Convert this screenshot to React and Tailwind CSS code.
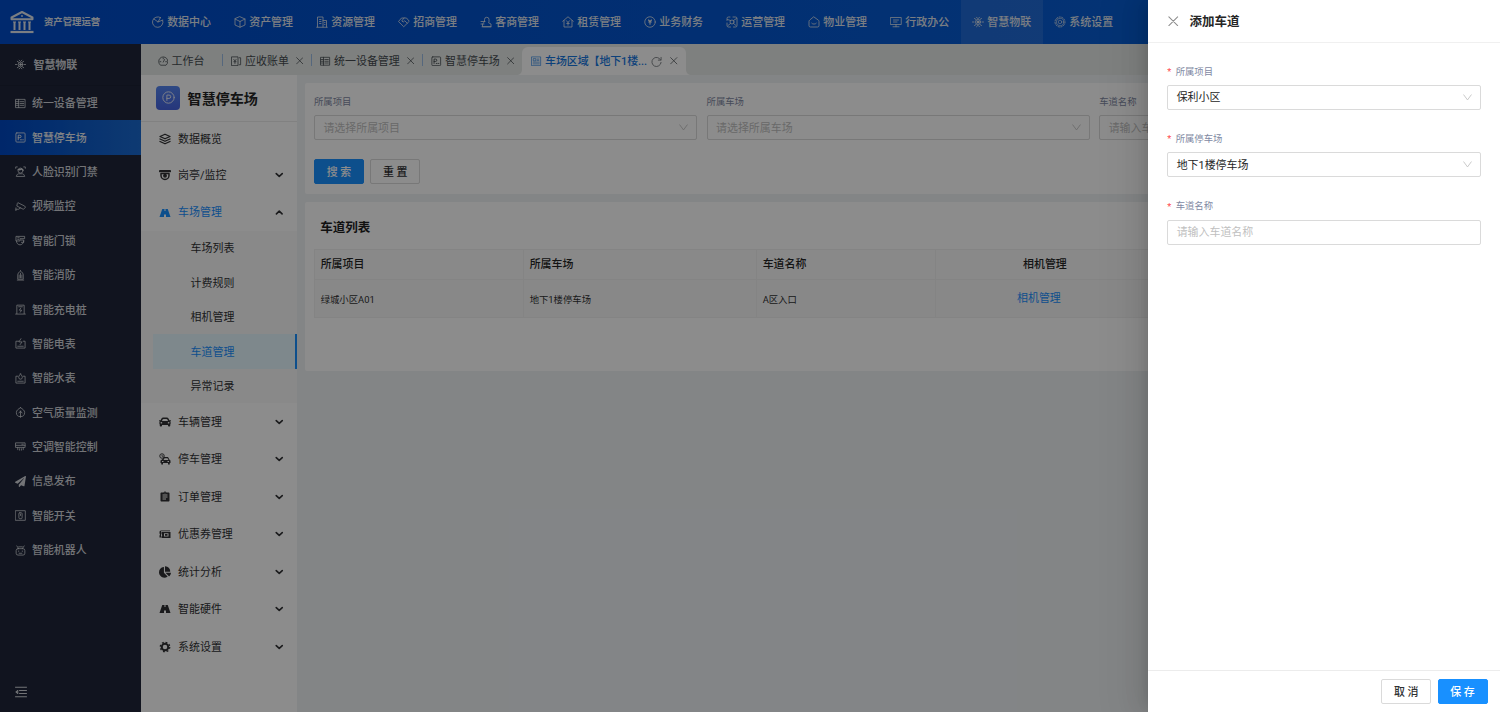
import React from 'react';
import { FaCar, FaChartPie, FaPaperPlane } from 'react-icons/fa';
import { MdAssignment } from 'react-icons/md';

function Icon({ children, className = 'size-[11px]', w = 1.7 }) {
  return (
    <svg
      viewBox="0 0 24 24"
      fill="none"
      stroke="currentColor"
      strokeWidth={w}
      strokeLinecap="round"
      strokeLinejoin="round"
      className={`shrink-0 ${className}`}
    >
      {children}
    </svg>
  );
}

const art = {
  data: (
    <>
      <path d="M21.5 9A10.5 10.5 0 1 1 17 3.2" />
      <path d="M4 6l8 6 9.5-4M12 12l5-9" />
    </>
  ),
  cube: (
    <>
      <path d="M12 1.5l10 4.5v12l-10 4.5L2 18V6z" />
      <path d="M2 6l10 5 10-5M12 11v11.5" />
    </>
  ),
  building: (
    <>
      <path d="M1.500 22.500h21M3 22V2h11v20M14 9h7v13" />
      <path d="M7 7h3M7 11h3M7 15h3M17 13h1M17 17h1" />
    </>
  ),
  deal: (
    <>
      <path d="M1.500 10.500L7 4h10l5.500 6.500L12 21z" />
      <path d="M12 4L7.500 10l3 2 3-2.500 5 5" />
    </>
  ),
  client: (
    <>
      <path d="M9 11V7a4.500 4.500 0 0 1 9 0v4a4 4 0 0 1-1 2.500l5 2.500v5.500H5v-5z" />
      <path d="M2 11h8M2 16h6M4 21.500h18" />
    </>
  ),
  rent: (
    <>
      <path d="M1.500 10.500L12 1.500l10.500 9M4 9v13h16V9" />
      <path d="M9 9.500l3 3.500 3-3.500M12 13v5.500M9.500 15h5" />
    </>
  ),
  finance: (
    <>
      <circle cx="12" cy="12" r="10.500" />
      <path d="M9 8l3 3 3-3M9.500 12h5M12 11v5.500" strokeWidth="2.200" />
    </>
  ),
  ops: (
    <>
      <path d="M2 9V5a3 3 0 0 1 3-3h3M14 2h5a3 3 0 0 1 3 3v14a3 3 0 0 1-3 3h-4M9 22H5a3 3 0 0 1-3-3v-5" />
      <circle cx="12" cy="12" r="4" />
      <path d="M3 7l6 2M15 9l6-4M4 19l5-4M15 15l5 4" />
    </>
  ),
  property: (
    <>
      <path d="M12 2l9 6.500a3 3 0 0 1 1 2.500v8a3 3 0 0 1-3 3H5a3 3 0 0 1-3-3v-8a3 3 0 0 1 1-2.500z" />
      <path d="M7.500 14.500a6 6 0 0 0 9 0" />
    </>
  ),
  office: (
    <>
      <path d="M1.500 3h21v14h-21zM12 17v4.500M6 21.500h12" />
      <path d="M7 8h10M7 12h7" />
    </>
  ),
  iot: (
    <>
      <circle cx="12" cy="12" r="5" />
      <circle cx="12" cy="12" r="2" fill="currentColor" />
      <path d="M1 12h3M20 12h3M5 5l3 2M16 7l3-2M5 19l3-2M16 17l3 2M9 2.500l3 3 3-3M9 21.500l3-3 3 3" />
    </>
  ),
  gearDash: (
    <>
      <circle cx="12" cy="12" r="10" strokeDasharray="2.500 3" />
      <circle cx="12" cy="12" r="7.500" strokeWidth="1.200" />
      <circle cx="12" cy="12" r="3.500" strokeWidth="1.200" />
    </>
  ),
  device: (
    <>
      <path d="M2 3h20v18H2zM8 3v18" />
      <path d="M11 8h8M11 12h8M11 16h8M2 8h6M2 12h6M2 16h6" />
    </>
  ),
  parking: (
    <>
      <rect x="2" y="2" width="20" height="20" rx="2" />
      <path d="M7 17V7h3.500a2.700 2.700 0 0 1 0 5.500H7M12 17h2M17 17h1" strokeWidth="2" />
    </>
  ),
  face: (
    <>
      <path d="M1.500 5V2H5M19 2h3.500v3M3 22c1-5 5-5 5-5h8s4 0 5 5z" />
      <circle cx="12" cy="10" r="5.500" />
      <path d="M7 8c4 1 7-2 7-2s1 2 3 2" strokeWidth="3" />
    </>
  ),
  camera: (
    <>
      <path d="M7 4L21 11a3 3 0 0 1 0 5l-3 2L4 11l1-5z" />
      <path d="M2 21v-6M2 18h6l4-3" />
    </>
  ),
  lock: (
    <>
      <path d="M3 3h18v5H11v5H3zM3 13c0 5 4 8.500 8 8.500s8-3.500 8-8.500" />
      <path d="M6 6h3M6 9.500h2M13 11h6v5h-5" />
    </>
  ),
  fire: (
    <>
      <path d="M12 2c4 3 6 6 6 9v9H6v-9c0-3 2-6 6-9zM5 22h14" />
      <path d="M12 7v10M9 11v6M15 11v6" />
    </>
  ),
  charger: (
    <>
      <path d="M4 21V2.500h16V21M1.500 22h21M8 6h8" />
      <path d="M12.500 9L9.500 13.500h5L11.500 18" />
    </>
  ),
  electric: (
    <>
      <path d="M8 7H2v15h20V7h-4M6 18h12" />
      <path d="M13 1.500L8.500 8.500h7L11 14.500" />
    </>
  ),
  water: (
    <>
      <path d="M6 7H2v15h20V7h-4M6 18h12" />
      <path d="M12 2c3 4 4 5.500 4 7.500a4 4 0 0 1-8 0C8 7.500 9 6 12 2z" />
    </>
  ),
  air: (
    <>
      <path d="M12 1.500c5 3 9 6 9 10.500a9 9 0 0 1-18 0C3 7.500 7 4.500 12 1.500zM12 9v13.500" />
      <path d="M12 9l-3.500 4M12 9l3.500 4" />
    </>
  ),
  ac: (
    <>
      <path d="M2 4h20v10H2zM2 9.500h20M15 7h3" />
      <path d="M6 14v5M10 17v3M14 17v3M18 14v5" />
    </>
  ),
  toggle: (
    <>
      <path d="M1.500 1.500h21v21h-21z" />
      <rect x="8.500" y="6" width="7" height="13" rx="2" />
      <path d="M12 9v3" />
    </>
  ),
  robot: (
    <>
      <rect x="2.500" y="8" width="19" height="14" rx="4" />
      <path d="M8 8L4 2M16 8l4-6M8 4h8M8 13v1M16 13v1M9 18h6" />
    </>
  ),
  gauge: (
    <>
      <path d="M5 20.500a10.500 10.500 0 1 1 14 0zM12 14l3-6" />
      <path d="M12 4.500v2M4.500 13h2M17.500 13h2" />
    </>
  ),
  bill: (
    <>
      <path d="M2 2h14v20H2zM19 4h3v16h-3" />
      <path d="M6.500 8L9 11l2.500-3M9 11v6M6.500 13h5" />
    </>
  ),
  area: (
    <>
      <path d="M2 2h20v20H2z" />
      <path d="M5 18h14M5 14h14M6 6h5v5H6zM14 7h4M14 10h4" />
    </>
  ),
  menuLayers: (
    <>
      <path d="M12 2.500l10 4.500-10 4.500L2 7z" />
      <path d="M2 12l10 4.500L22 12M2 17l10 4.500L22 17" />
    </>
  ),
  dome: (
    <>
      <path d="M2 4h20" strokeWidth="4.500" />
      <path d="M4 9v4a8 8 0 0 0 16 0V9z" strokeWidth="3" />
      <circle cx="12" cy="13.500" r="2.500" fill="currentColor" />
    </>
  ),
};

const topNav = [
  ['数据中心', 'data'],
  ['资产管理', 'cube'],
  ['资源管理', 'building'],
  ['招商管理', 'deal'],
  ['客商管理', 'client'],
  ['租赁管理', 'rent'],
  ['业务财务', 'finance'],
  ['运营管理', 'ops'],
  ['物业管理', 'property'],
  ['行政办公', 'office'],
  ['智慧物联', 'iot'],
  ['系统设置', 'gearDash'],
];

const sideNav = [
  ['统一设备管理', 'device'],
  ['智慧停车场', 'parking'],
  ['人脸识别门禁', 'face'],
  ['视频监控', 'camera'],
  ['智能门锁', 'lock'],
  ['智能消防', 'fire'],
  ['智能充电桩', 'charger'],
  ['智能电表', 'electric'],
  ['智能水表', 'water'],
  ['空气质量监测', 'air'],
  ['空调智能控制', 'ac'],
  ['信息发布', 'plane'],
  ['智能开关', 'toggle'],
  ['智能机器人', 'robot'],
];

function Close({ className = 'size-[8px]', w = 2.4 }) {
  return (
    <Icon className={className} w={w}>
      <path d="M2 2l20 20M22 2L2 22" />
    </Icon>
  );
}

function Header() {
  return (
    <header className="flex h-[43.750px] shrink-0 items-center bg-linear-to-r from-[#004bc8] to-[#0d63d8] text-[#e0e6ee]">
      <div className="flex w-[140.700px] shrink-0 items-center pl-[9.500px]">
        <svg viewBox="0 0 24 24" className="size-[24px] fill-none stroke-current" strokeWidth="2">
          <path d="M1.500 7.500L12 2l10.500 5.500v1.700h-21z" strokeLinejoin="round" />
          <path d="M4.500 12v8M9.500 12v8M14.500 12v8M19.500 12v8" />
          <path d="M3 12h3M8 12h3M13 12h3M18 12h3" strokeWidth="1.200" />
          <path d="M.5 22h23" strokeWidth="2.200" />
          <circle cx="12" cy="6" r=".9" fill="currentColor" stroke="none" />
        </svg>
        <span className="ml-[10.500px] text-[9.375px] font-bold">资产管理运营</span>
      </div>
      <nav className="flex h-full">
        {topNav.map(([label, icon]) => (
          <div
            key={label}
            className={`flex h-full w-[82.030px] items-center pl-[11.500px] ${label === '智慧物联' ? 'bg-white/10' : ''}`}
          >
            <Icon className="size-[12px]" w={1.6}>{art[icon]}</Icon>
            <span className="ml-[3px] pt-[2px] text-[10.940px] font-medium whitespace-nowrap">{label}</span>
          </div>
        ))}
      </nav>
    </header>
  );
}

function SideBar() {
  return (
    <aside className="flex w-[140.600px] shrink-0 flex-col bg-[#1f263a] text-[#d2d4d9]">
      <div className="flex h-[42.300px] items-center border-b border-[#1c2233] pl-[15px]">
        <Icon>{art.iot}</Icon>
        <span className="ml-[7.500px] pt-[3px] text-[10.940px] font-bold">智慧物联</span>
      </div>
      {sideNav.map(([label, icon]) => (
        <div
          key={label}
          className={`flex h-[34.375px] items-center pl-[14.500px] ${
            label === '智慧停车场' ? 'bg-linear-to-r from-[#0047c2] to-[#1a6ad0] text-[#eceef2]' : ''
          }`}
        >
          {icon === 'plane' ? <FaPaperPlane className="size-[11px]" /> : <Icon>{art[icon]}</Icon>}
          <span className="ml-[6.500px] pt-[2.500px] text-[10.940px] font-medium">{label}</span>
        </div>
      ))}
      <div className="mt-auto pb-[14px] pl-[15px]">
        <Icon className="size-[12px]" w={2}>
          <path d="M1 2.500h22M9 9h14M9 15h14M1 21.500h22" />
          <path d="M5 9l-3.500 3L5 15z" fill="currentColor" />
        </Icon>
      </div>
    </aside>
  );
}

function Tab({ icon, label, close = true, className = '' }) {
  return (
    <div className={`flex items-center pt-[3px] text-[#454b50] ${className}`}>
      <Icon className="size-[10.500px]" w={1.800}>{art[icon]}</Icon>
      <span className="ml-[3.500px] pt-[2px] text-[10.940px] whitespace-nowrap">{label}</span>
      {close && <Close className="ml-[7px] size-[7.500px]" w={2.400} />}
    </div>
  );
}

function Divider() {
  return <span className="mt-[1px] h-[12px] w-px shrink-0 bg-[#9cbce4]" />;
}

function TabBar() {
  return (
    <div className="flex h-[31.250px] shrink-0 items-center bg-[#e6eae8] pl-[17px]">
      <Tab icon="gauge" label="工作台" close={false} className="w-[64px]" />
      <Divider />
      <Tab icon="bill" label="应收账单" className="w-[88.500px] pl-[8.500px]" />
      <Divider />
      <Tab icon="device" label="统一设备管理" className="w-[110px] pl-[8px]" />
      <Divider />
      <Tab icon="parking" label="智慧停车场" className="w-[98.500px] pl-[8px]" />
      <div className="relative flex h-[28px] w-[164px] shrink-0 items-center self-end rounded-t-[6px] bg-white pl-[9.500px] text-[#1677e0]">
        <svg viewBox="0 0 6 6" className="absolute bottom-0 -left-[6px] size-[6px] fill-white">
          <path d="M6 0v6H0c4 0 6-2 6-6z" />
        </svg>
        <svg viewBox="0 0 6 6" className="absolute -right-[6px] bottom-0 size-[6px] fill-white">
          <path d="M0 0v6h6C2 6 0 4 0 0z" />
        </svg>
        <Icon className="size-[10.500px]" w={1.400}>{art.area}</Icon>
        <span className="ml-[3.500px] w-[101.500px] pt-[2px] text-[10.940px] font-medium tracking-[-0.08px] whitespace-nowrap">
          车场区域【地下1楼...
        </span>
        <Icon className="ml-[4.500px] size-[11px] text-[#7c8084]" w={2}>
          <path d="M21 8.500A10 10 0 1 0 22 14M22 3v6h-6" />
        </Icon>
        <Close className="ml-[8px] size-[7.500px] text-[#5c6064]" w={2.600} />
      </div>
    </div>
  );
}

function Road() {
  return (
    <svg viewBox="0 0 24 24" className="size-[12px] fill-current">
      <path d="M6.500 4H11v4h2V4h4.500L23 20h-9v-5h-4v5H1z" />
      <path d="M11 10h2v3h-2z" />
    </svg>
  );
}

function ParkedCar() {
  return (
    <svg viewBox="0 0 24 24" className="size-[12px] fill-current">
      <path d="M10 8h8l3 5.500 2 1.500v5h-1.500v3H18v-3H8v3H4.500v-3H3v-5l3-2zM11 10.500L9 14h10l-2-3.500zM6 16v2h3v-2zM17 16v2h3v-2z" fillRule="evenodd" />
      <circle cx="6" cy="6" r="4.500" fill="none" stroke="currentColor" strokeWidth="1.800" />
      <path d="M6 3.500V6.500h3" fill="none" stroke="currentColor" strokeWidth="1.500" />
    </svg>
  );
}

function Coupon() {
  return (
    <svg viewBox="0 0 24 24" className="size-[12px] fill-current">
      <path d="M5 8h18v12H5v-3l1.500-2.500L5 11.500zM10 10.500v6.500h9v-6.500zM12 12h5v3.500h-5z" fillRule="evenodd" />
      <path d="M1 7l2.500-2H22v1.500H4V19H1v-3.500L2 13l-1-2.500z" />
    </svg>
  );
}

function Gear() {
  return (
    <svg viewBox="0 0 24 24" className="size-[12px]" fill="none" stroke="currentColor">
      <circle cx="12" cy="12" r="6.500" strokeWidth="4" />
      <circle cx="12" cy="12" r="9.500" strokeWidth="2.500" strokeDasharray="3.730" />
    </svg>
  );
}

const lineIcon = (name) => <Icon className="size-[12px]" w={2.700}>{art[name]}</Icon>;

function MenuRow({ icon, label, open, active, arrow = true, className = 'h-[37.500px]' }) {
  return (
    <div className={`flex items-center pr-[13px] pl-[18px] ${active ? 'text-[#1890ff]' : 'text-[#303133]'} ${className}`}>
      <span className="flex w-[12px] shrink-0">{icon}</span>
      <span className="ml-[7.500px] pt-[2px] text-[10.940px]">{label}</span>
      {arrow && (
        <Icon className="ml-auto size-[8.500px] text-[#303133]" w={4.600}>
          <path d={open ? 'M4 16.500l8-7.500 8 7.500' : 'M3.500 7.500l8.500 7.500 8.500-7.500'} />
        </Icon>
      )}
    </div>
  );
}

function SubMenu() {
  return (
    <aside className="flex w-[156.250px] shrink-0 flex-col bg-white">
      <div className="flex h-[46.500px] shrink-0 items-center border-b border-[#ececec] pl-[15.500px]">
        <span className="flex size-[24px] items-center justify-center rounded-[4px] bg-linear-to-b from-[#5585f0] to-[#4563e0] text-[#e4e8f8]">
          <Icon className="size-[13px]" w={1.800}>
            <circle cx="12" cy="12" r="10.500" />
            <path d="M9 17.500V7.500h4a3 3 0 0 1 0 6.200H9" />
          </Icon>
        </span>
        <span className="ml-[7.500px] pt-[3px] text-[14.060px] font-bold text-[#262626]">智慧停车场</span>
      </div>
      <MenuRow icon={lineIcon('menuLayers')} label="数据概览" arrow={false} className="h-[34.750px]" />
      <MenuRow icon={lineIcon('dome')} label="岗亭/监控" />
      <MenuRow icon={<Road />} label="车场管理" open active />
      <div className="bg-[#fafafa] pl-[12.500px]">
        {['车场列表', '计费规则', '相机管理', '车道管理', '异常记录'].map((label) => (
          <div
            key={label}
            className={`flex h-[34.375px] items-center pt-[2.500px] pl-[37.500px] text-[10.940px] ${
              label === '车道管理' ? 'border-r-2 border-[#1890ff] bg-[#e6f7ff] text-[#1890ff]' : 'text-[#303133]'
            }`}
          >
            {label}
          </div>
        ))}
      </div>
      <MenuRow icon={<FaCar className="size-[12px]" />} label="车辆管理" />
      <MenuRow icon={<ParkedCar />} label="停车管理" />
      <MenuRow icon={<MdAssignment className="size-[12px]" />} label="订单管理" />
      <MenuRow icon={<Coupon />} label="优惠券管理" />
      <MenuRow icon={<FaChartPie className="size-[12px]" />} label="统计分析" />
      <MenuRow icon={<Road />} label="智能硬件" />
      <MenuRow icon={<Gear />} label="系统设置" />
    </aside>
  );
}

function Box({ text, filled, select = true }) {
  return (
    <div
      className={`flex h-[25px] items-center rounded-[2px] border border-[#dadada] bg-white pr-[8px] pl-[8.500px] text-[10.940px] whitespace-nowrap ${
        filled ? 'text-[#262626]' : 'text-[#bfbfbf]'
      }`}
    >
      <span className="grow pt-[2px]">{text}</span>
      {select && (
        <Icon className="size-[9px] text-[#bfbfbf]" w={2.200}>
          <path d="M2 5l10 13.500L22 5" />
        </Icon>
      )}
    </div>
  );
}

function Button({ children, primary }) {
  return (
    <button
      className={`flex h-[25px] w-[50px] items-center justify-center rounded-[2px] border pt-[3px] text-[10.940px] font-medium ${
        primary ? 'border-[#1890ff] bg-[#1890ff] text-white' : 'border-[#dadada] bg-white text-[#303133]'
      }`}
    >
      {children}
    </button>
  );
}

function SearchCard() {
  const fields = [
    ['所属项目', '请选择所属项目', true],
    ['所属车场', '请选择所属车场', true],
    ['车道名称', '请输入车道名称', false],
  ];
  return (
    <section className="h-[111px] shrink-0 rounded-[2px] bg-white pt-[12px] pl-[9.300px]">
      <div className="flex gap-[9.300px]">
        {fields.map(([label, text, select]) => (
          <div key={label} className="w-[383.300px] shrink-0">
            <div className="mb-[6.500px] h-[14px] text-[9.375px] leading-[14px] text-[#7f89a3]">{label}</div>
            <Box text={text} select={select} />
          </div>
        ))}
      </div>
      <div className="mt-[18.500px] flex gap-[6.250px]">
        <Button primary>搜 索</Button>
        <Button>重 置</Button>
      </div>
    </section>
  );
}

const cols = 'grid w-[840.500px] grid-cols-[209px_233px_179px_219.500px]';
const line = 'flex items-center border-r border-b border-[#f0f0f0] pt-[2px]';
const cell = `${line} pl-[6px]`;

function TableCard() {
  return (
    <section className="mt-[7.800px] h-[169.500px] shrink-0 rounded-[2px] bg-white pl-[9px]">
      <h2 className="flex h-[47px] items-center pt-[6px] pl-[6.500px] text-[12.500px] font-bold text-[#1f1f1f]">车道列表</h2>
      <div className="w-[841.500px] border-t border-l border-[#f0f0f0]">
        <div className={`${cols} h-[30.500px] bg-[#fafafa] text-[10.940px] font-medium text-[#262626]`}>
          <div className={cell}>所属项目</div>
          <div className={cell}>所属车场</div>
          <div className={cell}>车道名称</div>
          <div className={`${line} justify-center`}>相机管理</div>
        </div>
        <div className={`${cols} h-[38px] bg-[#f8f8f8] text-[9.375px] text-[#303133]`}>
          <div className={cell}>绿城小区A01</div>
          <div className={cell}>地下1楼停车场</div>
          <div className={cell}>A区入口</div>
          <div className={`${line} justify-center pr-[12px] text-[10.940px] text-[#1890ff]`}>相机管理</div>
        </div>
      </div>
    </section>
  );
}

function DrawerField({ label, children }) {
  return (
    <div className="mb-[19.700px]">
      <div className="mb-[6.500px] flex h-[16px] items-center pt-[2px] text-[9.375px] text-[#7f89a3]">
        <span className="mt-[1px] mr-[4px] w-[4.500px] text-[#ff4d4f]">*</span>
        {label}
      </div>
      {children}
    </div>
  );
}

function Drawer() {
  return (
    <div className="absolute inset-0 flex justify-end bg-black/45">
      <div className="flex w-[351.560px] flex-col bg-white shadow-[-5px_0_12px_-6px_rgba(0,0,0,0.12),-7px_0_22px_0_rgba(0,0,0,0.08),-9px_0_38px_12px_rgba(0,0,0,0.05)]">
        <div className="flex h-[43px] shrink-0 items-center border-b border-[#f0f0f0] pl-[20px]">
          <Close className="size-[10.500px] text-[#8c8c8c]" w={2.300} />
          <span className="ml-[10.500px] pt-[2px] text-[12.500px] font-bold text-[#262626]">添加车道</span>
        </div>
        <div className="grow pt-[19.700px] pr-[19px] pl-[18.700px]">
          <DrawerField label="所属项目">
            <Box text="保利小区" filled />
          </DrawerField>
          <DrawerField label="所属停车场">
            <Box text="地下1楼停车场" filled />
          </DrawerField>
          <DrawerField label="车道名称">
            <Box text="请输入车道名称" select={false} />
          </DrawerField>
        </div>
        <div className="flex h-[41.700px] shrink-0 items-center justify-end gap-[6.250px] border-t border-[#ececec] pr-[12.500px]">
          <Button>取 消</Button>
          <Button primary>保 存</Button>
        </div>
      </div>
    </div>
  );
}

export default function App() {
  return (
    <div className="relative flex h-[712px] w-[1500px] flex-col overflow-hidden bg-[#eff2f5] font-[Roboto,'Noto_Sans_CJK_SC',sans-serif] leading-normal">
      <Header />
      <div className="flex min-h-0 grow">
        <SideBar />
        <div className="flex min-w-0 grow flex-col">
          <TabBar />
          <div className="flex min-h-0 grow">
            <SubMenu />
            <main className="flex min-w-0 grow flex-col overflow-hidden pt-[7.800px] pl-[7.800px]">
              <SearchCard />
              <TableCard />
            </main>
          </div>
        </div>
      </div>
      <Drawer />
    </div>
  );
}
